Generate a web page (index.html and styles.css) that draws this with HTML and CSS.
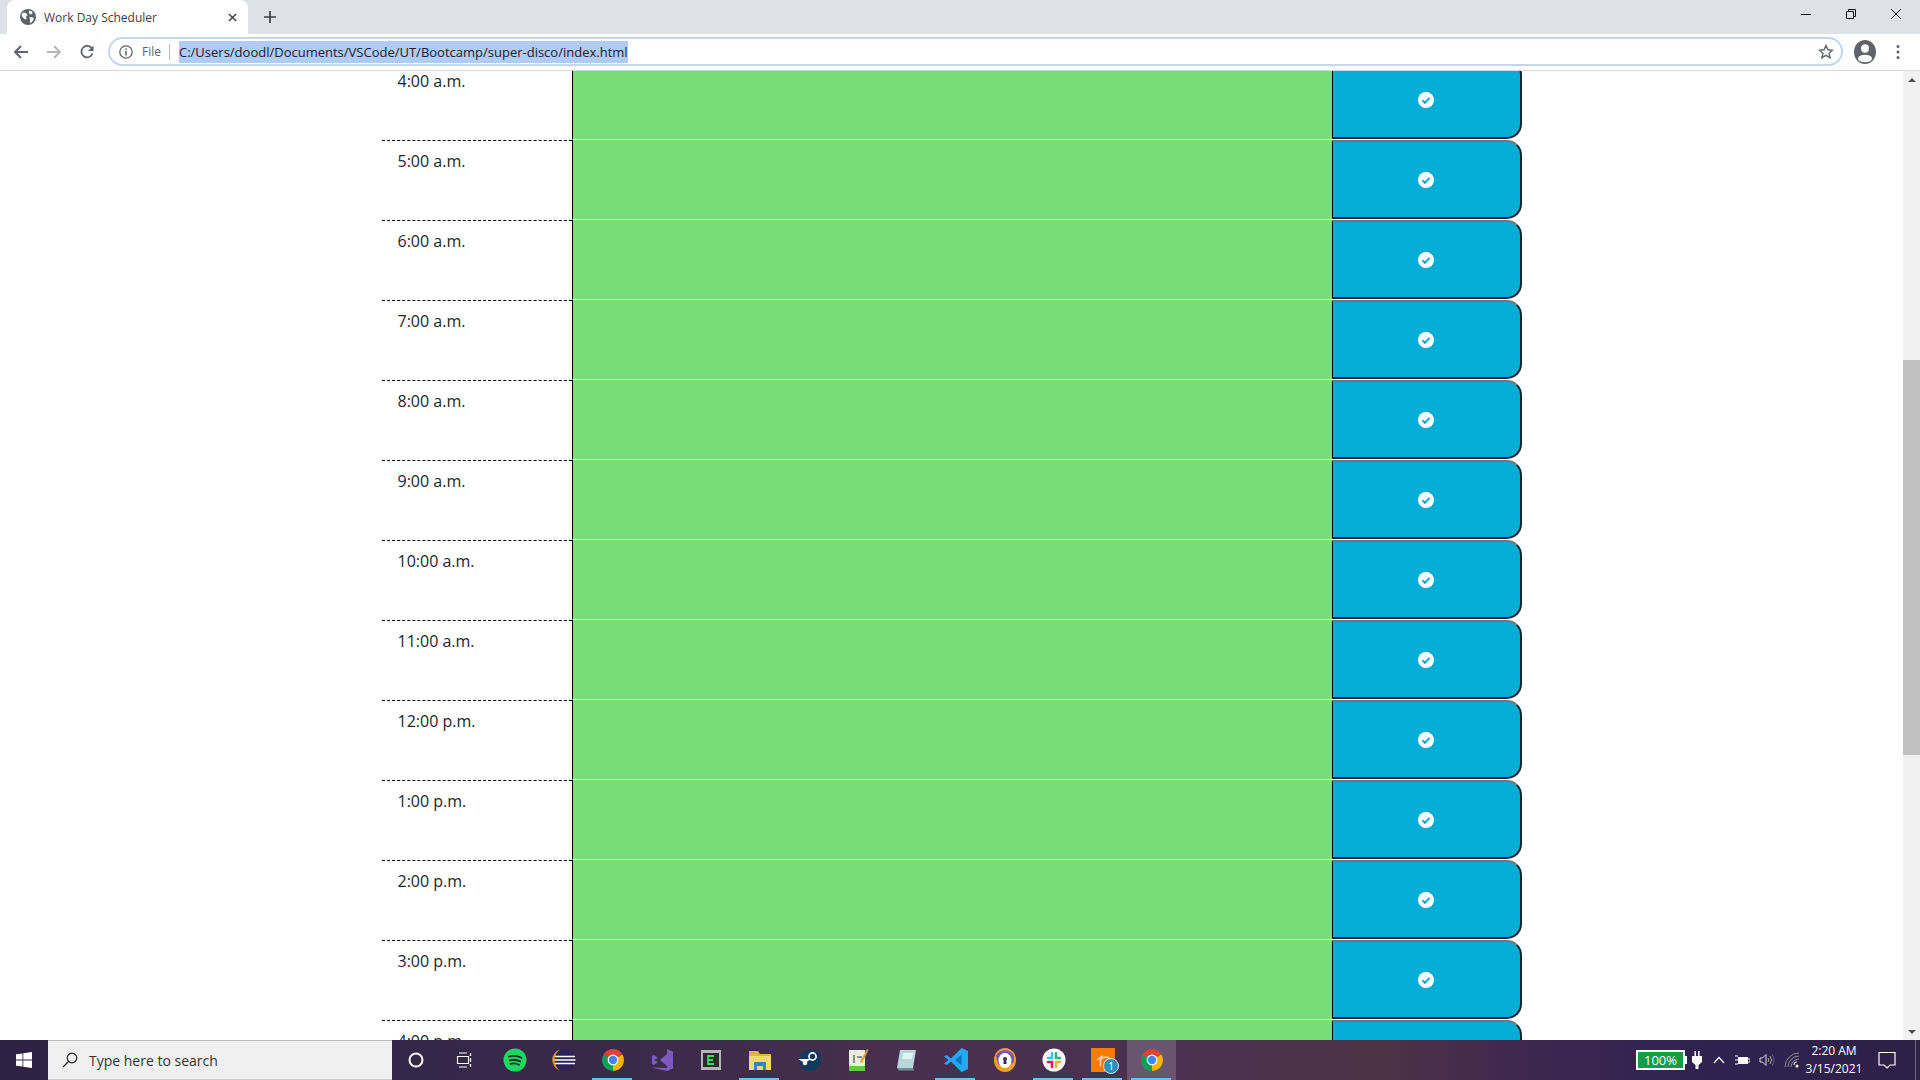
FILE: index.html
```html
<!DOCTYPE html>
<html lang="en">
<head>
<meta charset="utf-8">
<title>Work Day Scheduler</title>
<link rel="stylesheet" href="styles.css">
</head>
<body>
<svg class="defs" width="0" height="0" aria-hidden="true">
  <symbol id="check" viewBox="0 0 16 16"><circle cx="8" cy="8" r="8" fill="#fff"/><path d="M4.4 8.3l2.5 2.5 4.7-4.9" fill="none" stroke="#06aed5" stroke-width="2"/></symbol>
  <symbol id="chrome" viewBox="0 0 24 24"><path fill="#db4437" d="M12 12L2.5 6.5A11 11 0 0 1 21.5 6.5Z"/><path fill="#f4b400" d="M12 12L21.5 6.5A11 11 0 0 1 12 23Z"/><path fill="#0f9d58" d="M12 12L12 23A11 11 0 0 1 2.5 6.5Z"/><circle cx="12" cy="12" r="5.4" fill="#fff"/><circle cx="12" cy="12" r="4.2" fill="#4285f4"/></symbol>
</svg>
<header class="tabstrip">
  <div class="tab">
    <svg class="tab-globe" viewBox="0 0 16 16"><circle cx="8" cy="8" r="8" fill="#5f6368"/><path fill="#fff" d="M3 3.5l3 .5 1.5 2L6 7.5 6.5 10 5 10.500 2 7.500 1.500 6zM9 1.500l3 1 .5 2-2 1L9 4zM9.500 8l3.500.5 1 1.500-2.500 3.500-1.500.5 0-3z"/></svg>
    <span class="tab-title">Work Day Scheduler</span>
    <svg class="tab-close" viewBox="0 0 10 10"><path d="M1 1l8 8M9 1l-8 8" stroke="#3c4043" stroke-width="1.600"/></svg>
  </div>
  <svg class="newtab" viewBox="0 0 12 12"><path d="M6 0v12M0 6h12" stroke="#3c4043" stroke-width="1.700"/></svg>
  <div class="winctl">
    <svg class="win-ico" viewBox="0 0 12 12"><path d="M1 6.500h10" stroke="#111" stroke-width="1"/></svg>
    <svg class="win-ico" viewBox="0 0 12 12"><path d="M1.500 3.500h7v7h-7zM3.500 3.500v-2h7v7h-2" fill="none" stroke="#111" stroke-width="1"/></svg>
    <svg class="win-ico" viewBox="0 0 12 12"><path d="M1 1l10 10M11 1L1 11" stroke="#111" stroke-width="1"/></svg>
  </div>
</header>
<nav class="toolbar">
  <div class="navbtn"><svg class="nav-ico" viewBox="0 0 16 16"><path d="M15 8H2M8 2L2 8l6 6" fill="none" stroke="#5f6368" stroke-width="1.900"/></svg></div>
  <div class="navbtn"><svg class="nav-ico" viewBox="0 0 16 16"><path d="M1 8h13M8 2l6 6-6 6" fill="none" stroke="#b4b6b9" stroke-width="1.900"/></svg></div>
  <div class="navbtn"><svg class="nav-ico" viewBox="0 0 16 16"><path d="M13.500 9.500A5.700 5.700 0 1 1 12.500 4" fill="none" stroke="#5f6368" stroke-width="1.800"/><path fill="#5f6368" d="M14.500 1.500V7H9z"/></svg></div>
  <div class="omnibox">
    <svg class="info" viewBox="0 0 14 14"><circle cx="7" cy="7" r="6.200" fill="none" stroke="#5f6368" stroke-width="1.300"/><path d="M7 6v4.500M7 3.300v1.500" stroke="#5f6368" stroke-width="1.500"/></svg>
    <span class="scheme">File</span>
    <span class="omni-sep"></span>
    <span class="url">C:/Users/doodl/Documents/VSCode/UT/Bootcamp/super-disco/index.html</span>
    <svg class="star" viewBox="0 0 16 16"><path d="M8 1.500l1.900 4.300 4.600.4-3.500 3 1.100 4.600L8 11.400l-4.100 2.400 1.100-4.600-3.500-3 4.600-.4z" fill="none" stroke="#5f6368" stroke-width="1.400"/></svg>
  </div>
  <div class="toolbar-end">
    <svg class="avatar" viewBox="0 0 22 24"><ellipse cx="11" cy="12" rx="11" ry="12" fill="#5f6368"/><ellipse cx="11" cy="8.500" rx="4" ry="4.200" fill="#fff"/><ellipse cx="11" cy="18.500" rx="7" ry="3.800" fill="#fff"/></svg>
    <svg class="dots" viewBox="0 0 4 16"><circle cx="2" cy="2.500" r="1.500" fill="#5f6368"/><circle cx="2" cy="8" r="1.500" fill="#5f6368"/><circle cx="2" cy="13.500" r="1.500" fill="#5f6368"/></svg>
  </div>
</nav>
<div class="viewport">
  <main class="page">
    <section class="schedule">
      <div class="row"><div class="hour">4:00 a.m.</div><div class="plan"></div><div class="save"><svg class="check"><use href="#check"/></svg></div></div>
      <div class="row"><div class="hour">5:00 a.m.</div><div class="plan"></div><div class="save"><svg class="check"><use href="#check"/></svg></div></div>
      <div class="row"><div class="hour">6:00 a.m.</div><div class="plan"></div><div class="save"><svg class="check"><use href="#check"/></svg></div></div>
      <div class="row"><div class="hour">7:00 a.m.</div><div class="plan"></div><div class="save"><svg class="check"><use href="#check"/></svg></div></div>
      <div class="row"><div class="hour">8:00 a.m.</div><div class="plan"></div><div class="save"><svg class="check"><use href="#check"/></svg></div></div>
      <div class="row"><div class="hour">9:00 a.m.</div><div class="plan"></div><div class="save"><svg class="check"><use href="#check"/></svg></div></div>
      <div class="row"><div class="hour">10:00 a.m.</div><div class="plan"></div><div class="save"><svg class="check"><use href="#check"/></svg></div></div>
      <div class="row"><div class="hour">11:00 a.m.</div><div class="plan"></div><div class="save"><svg class="check"><use href="#check"/></svg></div></div>
      <div class="row"><div class="hour">12:00 p.m.</div><div class="plan"></div><div class="save"><svg class="check"><use href="#check"/></svg></div></div>
      <div class="row"><div class="hour">1:00 p.m.</div><div class="plan"></div><div class="save"><svg class="check"><use href="#check"/></svg></div></div>
      <div class="row"><div class="hour">2:00 p.m.</div><div class="plan"></div><div class="save"><svg class="check"><use href="#check"/></svg></div></div>
      <div class="row"><div class="hour">3:00 p.m.</div><div class="plan"></div><div class="save"><svg class="check"><use href="#check"/></svg></div></div>
      <div class="row"><div class="hour">4:00 p.m.</div><div class="plan"></div><div class="save"><svg class="check"><use href="#check"/></svg></div></div>
    </section>
  </main>
  <aside class="scrollbar">
    <div class="sb-btn"><span class="sb-up"></span></div>
    <div class="sb-track"><div class="sb-thumb"></div></div>
    <div class="sb-btn"><span class="sb-down"></span></div>
  </aside>
</div>
<footer class="taskbar">
  <div class="start"><svg class="winlogo" viewBox="0 0 16 16"><path fill="#fff" d="M0 2.300l6.500-.9v6.200H0zM7.300 1.300L16 0v7.600H7.300zM0 8.400h6.500v6.200L0 13.700zM7.300 8.400H16V16l-8.700-1.200z"/></svg></div>
  <div class="search">
    <svg class="search-ico" viewBox="0 0 16 16"><circle cx="10" cy="6" r="4.800" fill="none" stroke="#222" stroke-width="1.200"/><path d="M6.500 9.500L1 15" stroke="#222" stroke-width="1.300"/></svg>
    <span class="search-text">Type here to search</span>
  </div>
  <div class="sys"><svg class="ico16" viewBox="0 0 16 16"><circle cx="8" cy="8" r="6.500" fill="none" stroke="#fff" stroke-width="2"/></svg></div>
  <div class="sys"><svg class="ico16" viewBox="0 0 16 16"><path d="M3 1h8M3 15h8M1.500 4.500h11v7h-11z" fill="none" stroke="#fff" stroke-width="1.100"/><path d="M14.500 1v3M14.500 6v4M14.500 12v3" stroke="#fff" stroke-width="1.300"/></svg></div>
  <div class="apps">
    <div class="app"><svg class="ico24" viewBox="0 0 24 24"><circle cx="12" cy="12" r="11.500" fill="#1ed760"/><path d="M6 8.500c4-1 9-.8 12.500 1.300M6.800 12.300c3.500-.9 7.500-.6 10.500 1.200M7.500 15.800c3-.7 6-.5 8.500 1" fill="none" stroke="#17301f" stroke-width="1.800" stroke-linecap="round"/></svg></div>
    <div class="app"><svg class="ico24" viewBox="0 0 24 24"><circle cx="13" cy="12" r="11" fill="#2c2255"/><path d="M8 1.500A11 11 0 0 0 8 22.500A13 13 0 0 1 8 1.500z" fill="#f7941e"/><path d="M3 8.500h20M2.500 12h21M3 15.500h20" stroke="#fff" stroke-width="1.500"/></svg></div>
    <div class="app on"><svg class="ico24"><use href="#chrome"/></svg></div>
    <div class="app"><svg class="ico24" viewBox="0 0 24 24"><path fill="#7d5bbe" d="M17 1l6 2.500v17L17 23 1 19.500l16 .5zM17 6v12l-7-6zM2 8l2-1 4 3 -4 2 4 2-4 3-2-1z"/></svg></div>
    <div class="app"><svg class="ico24" viewBox="0 0 24 24"><rect x="2" y="2" width="20" height="20" fill="#b5b5b5"/><rect x="4" y="5" width="16" height="14" fill="#2a2a2a"/><path d="M15 8H9v8h6M9 12h5" fill="none" stroke="#3fd463" stroke-width="1.800"/></svg></div>
    <div class="app on"><svg class="ico24" viewBox="0 0 24 24"><path fill="#e3b341" d="M1 3h9l2 3h11v16H1z"/><path fill="#f7d774" d="M1 8h22v14H1z"/><path fill="#2f86c9" d="M6 14h12v8h-3v-4H9v4H6z"/></svg></div>
    <div class="app"><svg class="ico24" viewBox="0 0 24 24"><circle cx="13" cy="12" r="11" fill="#113a5c"/><circle cx="15.500" cy="8.500" r="3.600" fill="none" stroke="#fff" stroke-width="1.600"/><circle cx="8" cy="15" r="2.300" fill="#fff"/><path d="M1 11l7 4 6-4" fill="#fff"/></svg></div>
    <div class="app"><svg class="ico24" viewBox="0 0 24 24"><rect x="3" y="2" width="16" height="21" fill="#e8f0d8"/><rect x="3" y="18" width="16" height="5" fill="#6fc24c"/><path d="M8 7v8M11 9h5" stroke="#333" stroke-width="1"/><path d="M14 14L21 1l1.500 1L16 15z" fill="#d9a441"/></svg></div>
    <div class="app"><svg class="ico24" viewBox="0 0 24 24"><path fill="#b7d6da" d="M5 2h16l-3 18H2z"/><path fill="#6f8d95" d="M2 20h16l1 2.500H4z"/><path fill="#e4f0f2" d="M8 5h10l-1 6H7z"/></svg></div>
    <div class="app on"><svg class="ico24" viewBox="0 0 24 24"><path fill="#23a9f2" d="M17.500 0L24 3v18l-6.500 3L7 13.500 2.500 17 0 15.500 4.500 12 0 8.500 2.500 7 7 10.500z"/><path fill="#0a74c4" d="M17.500 6.500L11 12l6.500 5.500z"/></svg></div>
    <div class="app"><svg class="ico24" viewBox="0 0 24 24"><ellipse cx="12" cy="12" rx="11" ry="12" fill="#f2a11f"/><path d="M3 8A10 10 0 0 1 21 8L21 14 12 20 5 16z" fill="#7653c9"/><ellipse cx="12" cy="12.500" rx="6.500" ry="7.500" fill="#fff"/><circle cx="12" cy="11" r="2" fill="#33305a"/><path d="M11 11h2l.7 5h-3.400z" fill="#33305a"/></svg></div>
    <div class="app on"><svg class="ico24" viewBox="0 0 24 24"><circle cx="12" cy="12" r="11.500" fill="#fff"/><path d="M10 5v5H6" fill="none" stroke="#36c5f0" stroke-width="2.600" stroke-linecap="round"/><path d="M14 5v5h4" fill="none" stroke="#2eb67d" stroke-width="2.600" stroke-linecap="round"/><path d="M10 19v-5H6" fill="none" stroke="#e01e5a" stroke-width="2.600" stroke-linecap="round"/><path d="M14 19v-5h4" fill="none" stroke="#ecb22e" stroke-width="2.600" stroke-linecap="round"/></svg></div>
    <div class="app on app-badged"><svg class="ico24 ico-orange" viewBox="0 0 24 24"><rect width="24" height="24" fill="#f57c00"/><path d="M9 18c2-3-1-4 1-7 2-2 6-3 9 0M6 12c2-1 3-3 6-4" fill="none" stroke="#ffd9b0" stroke-width="1.500"/></svg><span class="badge">1</span></div>
    <div class="app on active"><svg class="ico24"><use href="#chrome"/></svg></div>
  </div>
  <div class="tray">
    <div class="battery"><span class="battery-fill">100%</span></div><span class="battery-nub"></span>
    <svg class="plug" viewBox="0 0 10 18"><path fill="#fff" d="M2.500 0h1.500v5h2V0h1.500v5H10v6l-3.500 3v4h-3v-4L0 11V5h2.500z"/></svg>
    <svg class="chev" viewBox="0 0 12 8"><path d="M1 7l5-5.500L11 7" fill="none" stroke="#fff" stroke-width="1.200"/></svg>
    <svg class="tray-ico tray-charge" viewBox="0 0 16 16"><rect x="4" y="5" width="10" height="7" fill="#fff"/><path d="M1 4h3M1 8h3M1 12h3M14 7h2v3h-2" stroke="#fff"/></svg>
    <svg class="tray-ico tray-speaker" viewBox="0 0 16 16"><path d="M1 6h2.500L7 2.500v11L3.500 10H1z" fill="none" stroke="#ddd" stroke-width="1"/><path d="M9 6q1.500 2 0 4M11 4q3 4 0 8" fill="none" stroke="#aaa" stroke-width="1"/><path d="M13 2.500q4 5.500 0 11" fill="none" stroke="#666" stroke-width="1"/></svg>
    <svg class="tray-ico tray-wifi" viewBox="0 0 16 16"><path d="M1 15A14 14 0 0 1 15 1M4 15A11 11 0 0 1 15 4M7 15a8 8 0 0 1 8-8" fill="none" stroke="#8d8d9b" stroke-width="1"/><path d="M10 13a3 3 0 0 1 3-3" fill="none" stroke="#ddd" stroke-width="1.200"/><circle cx="13" cy="14" r="1.500" fill="#fff"/></svg>
    <div class="clock"><span class="clock-line">2:20 AM</span><span class="clock-line">3/15/2021</span></div>
    <svg class="notify" viewBox="0 0 20 20"><path d="M2 2.500h16v12.500h-5l-3 3-3-3H2z" fill="none" stroke="#fff" stroke-width="1.200"/></svg>
    <span class="desktop-edge"></span>
  </div>
</footer>
</body>
</html>
```
FILE: styles.css
```css
* { box-sizing: border-box; }
html, body { margin: 0; height: 100%; overflow: hidden; }
body {
  display: flex;
  flex-direction: column;
  height: 100vh;
  background: #fff;
  font-family: "Open Sans", "Noto Sans", sans-serif;
  color: #212529;
}
.defs { position: absolute; }

/* Browser chrome */
.tabstrip {
  flex: 0 0 34px;
  display: flex;
  align-items: flex-end;
  padding-left: 7px;
  background: #dee1e6;
}
.tab {
  width: 241px;
  height: 34px;
  display: flex;
  align-items: center;
  padding-left: 13px;
  background: #fff;
  border-radius: 8px 8px 0 0;
}
.tab-globe { width: 16px; height: 16px; flex: none; }
.tab-title { margin-left: 8px; font-size: 12px; color: #3c4043; white-space: nowrap; }
.tab-close { width: 9px; height: 9px; margin-left: auto; margin-right: 11px; flex: none; }
.newtab { width: 12px; height: 12px; margin: 0 0 11px 16px; flex: none; }
.winctl { margin-left: auto; display: flex; align-self: stretch; align-items: center; padding: 0 18px 6px 0; gap: 33px; }
.win-ico { width: 12px; height: 12px; }

.toolbar {
  flex: 0 0 37px;
  display: flex;
  align-items: center;
  padding: 0 0 1px 5px;
  background: #fff;
  border-bottom: 1px solid #d4d8df;
}
.navbtn { width: 32px; margin-right: 1px; display: flex; justify-content: center; }
.nav-ico { width: 16px; height: 16px; }
.omnibox {
  flex: 1;
  height: 29px;
  margin-left: 4px;
  display: flex;
  align-items: center;
  padding: 0 7px 0 9px;
  border: 2px solid #c4d6ea;
  border-radius: 15px;
}
.info { width: 14px; height: 14px; flex: none; }
.scheme { margin-left: 9px; font-size: 12px; color: #5f6368; }
.omni-sep { width: 1px; height: 16px; margin: 0 9px 0 8px; background: #b8babd; }
.url {
  font-size: 13px;
  line-height: 22px;
  color: #202124;
  background: #b0cbf5;
  white-space: nowrap;
}
.star { width: 16px; height: 16px; margin-left: auto; flex: none; }
.toolbar-end { flex: 0 0 77px; display: flex; align-items: center; padding-left: 11px; }
.avatar { width: 22px; height: 24px; flex: none; }
.dots { width: 4px; height: 16px; margin-left: 20px; flex: none; }

/* Page */
.viewport { flex: 1; min-height: 0; display: flex; }
.page { flex: 1; min-width: 0; overflow: hidden; }
.schedule { width: 1140px; margin: -11px auto 0; }
.row { display: flex; height: 80px; }
.hour {
  flex: 0 0 190px;
  padding: 8px 0 0 16px;
  border-top: 1px dashed #000;
  font-size: 16px;
  line-height: 24px;
}
.plan {
  flex: 0 0 760px;
  background: #77dd77;
  border-left: 1px solid #000;
  border-bottom: 1px solid #fff;
}
.save {
  flex: 0 0 190px;
  height: 79px;
  display: flex;
  align-items: center;
  justify-content: center;
  background: #06aed5;
  border-style: solid;
  border-width: 2px 2px 2px 1px;
  border-color: #757575 #14222c #14222c #000;
  border-radius: 0 15px 15px 0;
}
.check { width: 16px; height: 16px; }

/* Scrollbar */
.scrollbar { flex: 0 0 17px; display: flex; flex-direction: column; background: #f1f1f1; }
.sb-btn { flex: 0 0 17px; display: flex; align-items: center; justify-content: center; }
.sb-up { border: 4px solid transparent; border-top: 0; border-bottom: 4px solid #505050; }
.sb-down { border: 4px solid transparent; border-bottom: 0; border-top: 4px solid #505050; }
.sb-track { flex: 1; }
.sb-thumb { height: 395px; margin: 272px 0 0; background: #c1c1c1; }

/* Taskbar */
.taskbar {
  flex: 0 0 40px;
  display: flex;
  align-items: center;
  background: linear-gradient(90deg, #2d2144 0%, #3a2a4a 33%, #4a3050 50%, #4a3150 60%, #4e3245 72%, #3c2750 80%, #2e2250 90%, #2d2148 100%);
}
.start { flex: 0 0 48px; display: flex; justify-content: center; }
.winlogo { width: 16px; height: 16px; }
.search {
  flex: 0 0 344px;
  align-self: stretch;
  display: flex;
  align-items: center;
  padding-left: 14px;
  background: #f0f0f0;
  border-top: 1px solid #bbb;
  border-bottom: 1px solid #ccc;
}
.search-ico { width: 16px; height: 16px; flex: none; }
.search-text { margin-left: 11px; font-size: 14px; color: #333; white-space: nowrap; }
.sys { flex: 0 0 48px; display: flex; justify-content: center; }
.ico16 { width: 16px; height: 16px; }
.apps { display: flex; align-self: stretch; margin-left: 2px; }
.app {
  position: relative;
  flex: 0 0 49px;
  display: flex;
  align-items: center;
  justify-content: center;
  border-bottom: 2px solid transparent;
  padding-top: 2px;
}
.app.on { border-bottom-color: transparent; }
.app.on::after {
  content: "";
  position: absolute;
  left: 4px;
  right: 5px;
  bottom: -2px;
  height: 2px;
  background: #76b9ed;
}
.app.active { background: #6a5570; }
.ico24 { width: 24px; height: 24px; }
.badge {
  position: absolute;
  left: 25px;
  top: 18px;
  width: 16px;
  height: 16px;
  border-radius: 50%;
  background: #2f8fbd;
  border: 1px solid #cfe6f2;
  color: #fff;
  font-size: 10px;
  line-height: 14px;
  text-align: center;
}
.tray { margin-left: auto; display: flex; align-items: center; align-self: stretch; padding-right: 4px; }
.battery { width: 49px; height: 20px; border: 2px solid #fff; background: #169c4c; text-align: center; }
.battery-fill { display: block; font-size: 13px; line-height: 16px; color: #fff; }
.battery-nub { width: 2px; height: 8px; background: #fff; }
.plug { width: 10px; height: 18px; margin-left: 5px; }
.chev { width: 12px; height: 8px; margin-left: 11px; }
.tray-ico { width: 16px; height: 16px; margin-left: 9px; flex: none; }
.clock { width: 60px; margin-left: 4px; display: flex; flex-direction: column; align-items: center; color: #fff; font-size: 12px; line-height: 18px; }
.clock-line { white-space: nowrap; }
.notify { width: 20px; height: 20px; margin-left: 13px; }
.desktop-edge { width: 1px; height: 40px; margin-left: 18px; background: #6b6480; }
```
